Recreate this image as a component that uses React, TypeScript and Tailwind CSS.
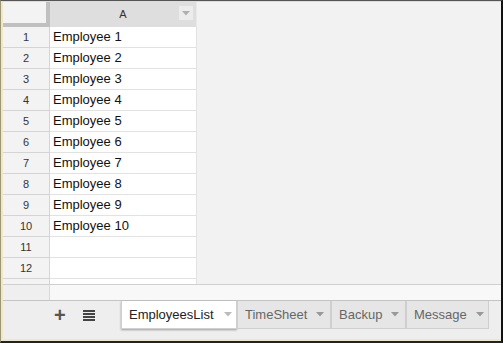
import React from "react";

const rows = Array.from({ length: 13 }, (_, i) => i + 1);

function Caret({ color = "#a8a8a8" }: { color?: string }) {
  return (
    <svg width="8" height="5" viewBox="0 0 8 5" className="shrink-0">
      <path d="M0 0 H8 L4 4.5 Z" fill={color} />
    </svg>
  );
}

export default function App() {
  const tabs = [
    { name: "TimeSheet", w: "w-[94px]" },
    { name: "Backup", w: "w-[75px]" },
    { name: "Message", w: "w-[83px]" },
  ];
  return (
    <div
      className="w-[503px] h-[343px] bg-[#efe7c9] border-t border-t-[#555] border-l border-l-[#9c9678] border-r-2 border-r-[#111] border-b-2 border-b-[#222] pl-[2px] pb-[2px] flex flex-col overflow-hidden"
      style={{ fontFamily: '"Liberation Sans", Arial, sans-serif' }}
    >
      <div className="flex-1 flex flex-col bg-[#f2f2f2] overflow-hidden">
        {/* grid */}
        <div className="h-[283px] flex overflow-hidden border-t border-t-[#dcdcdc]">
          <div className="w-[194px] flex flex-col shrink-0">
            {/* header */}
            <div className="flex h-[25px] shrink-0">
              <div className="w-[47px] h-[25px] bg-[#f3f3f3] border-r-4 border-b-4 border-[#c0c0c0] shrink-0" />
              <div className="w-[147px] h-[25px] bg-[#dedede] border-r border-[#e8e8e8] relative flex items-center justify-center text-[11px] text-[#333]">
                A
                <div className="absolute left-[129px] top-[4px] w-[14px] h-[14px] bg-[#ececec] flex items-center justify-center">
                  <Caret color="#b0b0b0" />
                </div>
              </div>
            </div>
            {rows.map((r) => (
              <div key={r} className="flex h-[21px] shrink-0">
                <div className="w-[47px] bg-[#f3f3f3] border-r border-b border-[#d4d4d4] flex items-center justify-center text-[11px] text-[#333] shrink-0">
                  {r}
                </div>
                <div className="w-[147px] bg-white border-r border-b border-[#e2e2e2] flex items-center pl-[3px] text-[13px] text-[#111]">
                  {r <= 10 ? `Employee ${r}` : ""}
                </div>
              </div>
            ))}
          </div>
          <div className="flex-1 bg-[#f2f2f2]" />
        </div>
        {/* scrollbar strip */}
        <div className="h-[17px] flex border-t border-[#d0d0d0] border-b border-b-[#c4c4c4] shrink-0">
          <div className="w-[47px] bg-[#efefef] border-r border-[#d8d8d8]" />
          <div className="flex-1 bg-[#f8f8f8]" />
        </div>
        {/* tab bar */}
        <div className="flex-1 bg-[#eeeeee] flex items-start">
          <div className="w-[118px] h-[28px] flex items-center shrink-0">
            <span className="ml-[51px] text-[20px] leading-none text-[#555] font-bold">+</span>
            <svg width="12" height="11" viewBox="0 0 12 11" className="ml-[17px]">
              <rect x="0" y="0" width="12" height="2" fill="#444" />
              <rect x="0" y="3" width="12" height="2" fill="#444" />
              <rect x="0" y="6" width="12" height="2" fill="#444" />
              <rect x="0" y="9" width="12" height="2" fill="#444" />
            </svg>
          </div>
          <div className="w-[116px] h-[28px] bg-white flex items-center pl-[7px] gap-[10px] text-[13px] text-[#222] shadow-[0_1px_2px_rgba(0,0,0,0.35)] border-x border-b border-[#d0d0d0] shrink-0">
            EmployeesList
            <Caret color="#bbbbbb" />
          </div>
          {tabs.map((t) => (
            <div
              key={t.name}
              className={`${t.w} h-[28px] bg-[#e6e6e6] border-x border-b border-[#cfcfcf] flex items-center pl-[7px] gap-[9px] text-[13px] text-[#666] shrink-0`}
            >
              {t.name}
              <Caret color="#999" />
            </div>
          ))}
        </div>
      </div>
    </div>
  );
}
